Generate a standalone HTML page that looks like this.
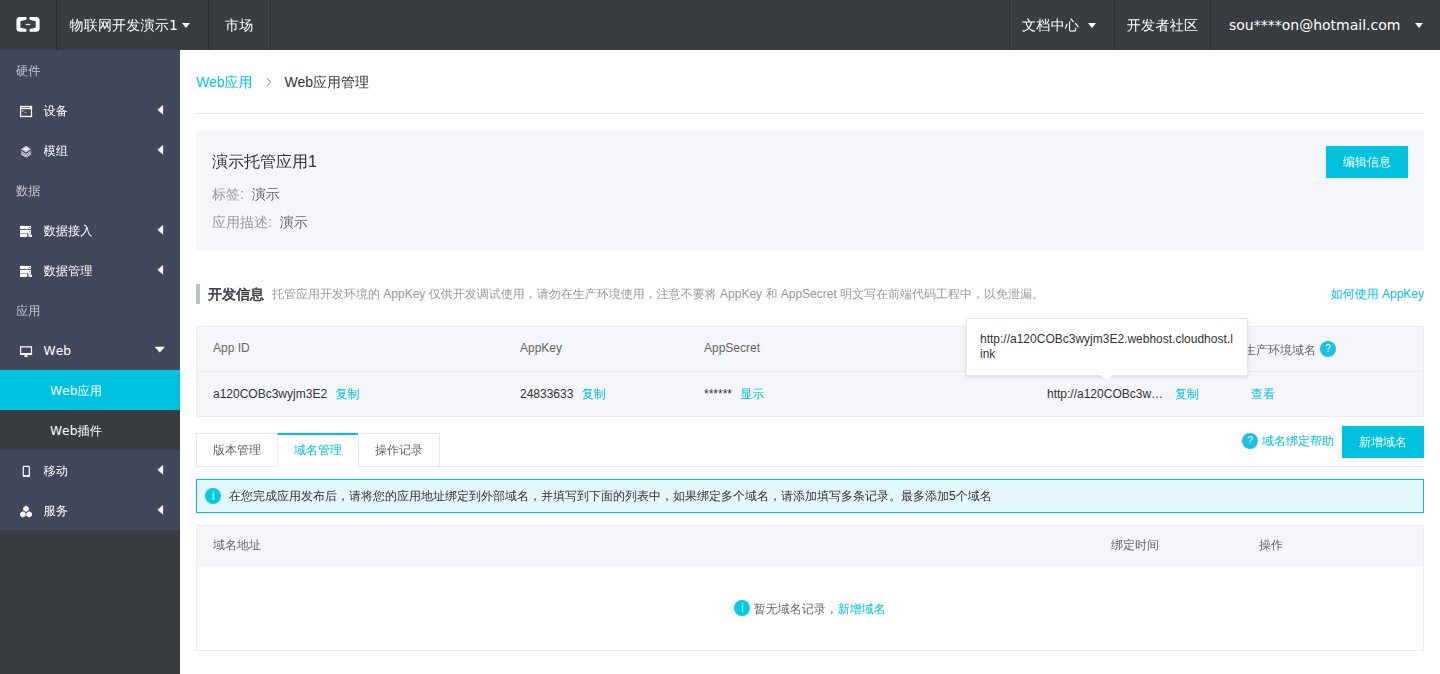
<!DOCTYPE html>
<html lang="zh-CN">
<head>
<meta charset="utf-8">
<title>Web应用管理</title>
<style>
*{box-sizing:border-box;margin:0;padding:0}
html,body{width:1440px;height:674px;overflow:hidden;background:#fff}
body{font-family:"Liberation Sans","WenQuanYi Zen Hei",sans-serif;font-size:12px;color:#333;position:relative}
a{color:#00c1de;text-decoration:none}
.ui{font-family:"DejaVu Sans","WenQuanYi Zen Hei",sans-serif;font-kerning:none}

/* top bar */
#top{position:absolute;left:0;top:0;width:1440px;height:50px;background:#373d41;color:#fff;font-size:14px}
#top .cell{position:absolute;top:0;height:50px;line-height:50px;border-right:1px solid #2a2f32;white-space:nowrap}
#top .cell.r{border-right:0;border-left:1px solid #2a2f32}
.caret{position:absolute;top:23px;width:0;height:0;border-left:4.5px solid transparent;border-right:4.5px solid transparent;border-top:5.4px solid #fff}

/* sidebar */
#side{position:absolute;left:0;top:50px;width:180px;height:624px;background:#373d41;color:#fff;font-size:12.25px}
#side .nav{background:#42485b;height:480px;position:relative}
#side .grp{height:40px;line-height:42px;overflow:hidden;padding-left:16px;color:#c4c7ce}
#side .it{height:40px;line-height:42px;overflow:hidden;position:relative;padding-left:43.6px;white-space:nowrap}
#side .it svg{position:absolute;left:16px;top:10px}
#side .it svg.ar{left:0;top:0}
#side .sub{height:40px;line-height:42px;overflow:hidden;padding-left:50px;background:#373d41}
#side .sub.on{background:#00c1de}

/* main */
#main{position:absolute;left:196px;top:50px;width:1228px;height:624px}
.crumb{position:absolute;left:0;top:0;width:1228px;height:64px;border-bottom:1px solid #ebecee;font-size:14px;line-height:64px}
.crumb .sep{display:inline-block;width:32px;height:14px;vertical-align:-2px}
.card{position:absolute;left:0;top:80px;width:1228px;height:120px;background:#f5f6fa}
.card h2{position:absolute;left:16px;top:20px;font-size:16px;font-weight:normal;line-height:24px;color:#333}
.card .ln{position:absolute;left:16px;font-size:14px;line-height:20px;color:#999}
.card .ln b{font-weight:normal;color:#666;margin-left:4px}
.btn{position:absolute;display:block;width:82px;height:32px;line-height:32px;text-align:center;background:#00c1de;color:#fff;font-size:12px}
.sec{position:absolute;left:0;top:234px;width:1228px;height:20px;line-height:20px;border-left:4px solid #b4c3cc;padding-left:8px;font-size:12px;color:#999;white-space:nowrap}
.sec b{font-size:14px;font-weight:normal;color:#373d41;-webkit-text-stroke:.6px #373d41;margin-right:8px;vertical-align:top}
.sec a{position:absolute;right:0;top:0}
.t1{position:absolute;left:0;top:276px;width:1228px;height:91px;background:#f5f6fa;border:1px solid #ebecee}
.t1 .hd{position:absolute;left:0;top:0;width:1226px;height:45px;border-bottom:1px solid #ebecee;color:#666}
.t1 span{position:absolute;white-space:nowrap;line-height:16px}
.tabs{position:absolute;left:0;top:383px;width:1228px;height:34px;border-bottom:1px solid #e8eaed}
.tabs .tb{position:absolute;top:0;height:34px;width:82px;border:1px solid #e6e8eb;line-height:32px;text-align:center;color:#666;background:#fff}
.tabs .tb.on{border-top:2px solid #00c1de;border-bottom-color:#fff;color:#00c1de;line-height:30px}
.qm{display:inline-block;width:16px;height:16px;border-radius:8px;background:#1fc0e0;color:rgba(255,255,255,.88);text-align:center;line-height:15px;font-size:10.5px;vertical-align:middle}
.alert{position:absolute;left:0;top:429px;width:1228px;height:34px;border:1px solid #00c1de;background:#e2f8fd;line-height:32px;padding-left:32px;color:#333}
.alert .qm,.empty .qm{background:#06c9e5;font-size:12px;color:rgba(255,255,255,.8)}
.alert .qm{position:absolute;left:8px;top:8px;line-height:16px}
.empty .qm{position:relative;top:-2px;line-height:17px}
.t2{position:absolute;left:0;top:475px;width:1228px;height:126px;border:1px solid #ebecee;background:#fff}
.t2 .hd{position:absolute;left:0;top:0;width:1226px;height:40px;background:#f5f6fa;border-bottom:1px solid #ebecee;color:#666}
.t2 span{position:absolute;white-space:nowrap;line-height:16px}
.empty{position:absolute;left:0;top:40px;width:1226px;height:84px;overflow:hidden;line-height:86px;text-align:center;color:#666}
.tip{position:absolute;left:770px;top:268px;width:282px;height:58px;background:#fff;border:1px solid #e4e7ea;box-shadow:0 1px 4px rgba(0,0,0,.12);padding:13px 13px 0 13px;line-height:15px;color:#333;word-break:break-all}
.tip i{position:absolute;left:135px;bottom:-5px;width:9px;height:9px;background:#fff;border-right:1px solid #e6e9ed;border-bottom:1px solid #e6e9ed;transform:rotate(45deg)}
</style>
</head>
<body>
<div id="top" class="ui">
  <div class="cell" style="left:0;width:57px"><svg style="position:absolute;left:16px;top:16px" width="25" height="17" viewBox="0 0 25 17"><g fill="#fff" transform="translate(.45 .9) scale(.98 .975)"><path d="M10.2 0H3.6A3.6 3.6 0 0 0 0 3.6V11.7A3.6 3.6 0 0 0 3.6 15.3H10.2V12.4L4 11V4.4L10.2 2.9Z"/><path d="M13.4 0H20A3.6 3.6 0 0 1 23.6 3.6V11.7A3.6 3.6 0 0 1 20 15.3H13.4V12.4L19.6 11V4.4L13.4 2.9Z"/><rect x="9.4" y="7.1" width="4.8" height="1.3" opacity=".85"/></g></svg></div>
  <div class="cell" style="left:57px;width:152px;padding-left:12.5px;letter-spacing:.2px">物联网开发演示1<span class="caret" style="left:125px"></span></div>
  <div class="cell" style="left:209px;width:62px;padding-left:16px;letter-spacing:.35px">市场</div>
  <div class="cell r" style="left:1009px;width:105px;padding-left:12px;letter-spacing:.35px">文档中心<span class="caret" style="left:78px"></span></div>
  <div class="cell r" style="left:1114px;width:96px;padding-left:11.7px;letter-spacing:.35px">开发者社区</div>
  <div class="cell r" style="left:1210px;width:230px;padding-left:18px">sou****on@hotmail.com<span class="caret" style="left:203.7px"></span></div>
</div>

<div id="side" class="ui">
 <div class="nav">
  <div class="grp">硬件</div>
  <div class="it"><svg width="20" height="20" viewBox="0 0 20 20"><g fill="#fff"><rect x="4" y="5.9" width="12.1" height="3.3"/><rect x="4" y="5.9" width="1.2" height="11.2"/><rect x="14.9" y="5.9" width="1.2" height="11.2"/><rect x="4" y="16" width="12.1" height="1.1"/><rect x="5.2" y="15.6" width="9.7" height=".5" opacity=".5"/><rect x="5.1" y="7.2" width="9" height=".8" fill="#42485b" opacity=".8"/><path d="M6.1 10.1l1.9 1-1.9 1z" opacity=".75"/><rect x="8.2" y="11.9" width="2.4" height=".8" opacity=".6"/></g></svg>设备<svg class="ar" width="180" height="40" viewBox="0 0 180 40"><path fill="#fff" d="M157.4 19.8L163.1 14.9V24.8Z"/></svg></div>
  <div class="it"><svg width="20" height="20" viewBox="0 0 20 20"><path d="M10.05 5.8L15.2 9.2L10.05 12.6L4.9 9.2Z" fill="#fff" opacity=".7"/><path d="M10.05 7.3L12.9 9.2L10.05 11.1L7.2 9.2Z" fill="#fff"/><g fill="none" stroke="#fff" stroke-width=".85" opacity=".95"><path d="M5 11.3L10.05 14.4L15.1 11.3"/><path d="M5 12.7L10.05 15.8L15.1 12.7"/><path d="M5 14.1L10.05 17L15.1 14.1"/></g></svg>模组<svg class="ar" width="180" height="40" viewBox="0 0 180 40"><path fill="#fff" d="M157.4 19.8L163.1 14.9V24.8Z"/></svg></div>
  <div class="grp">数据</div>
  <div class="it"><svg width="20" height="20" viewBox="0 0 20 20"><g fill="#fff"><rect x="4" y="5.9" width="11" height="3.1"/><rect x="4" y="9.9" width="11" height="3.2"/><rect x="4" y="13.1" width="7.3" height=".9" opacity=".55"/><rect x="4" y="14" width="7.3" height="3"/><path d="M12.1 13.1H15L13.5 16.9H12.7Z" opacity=".9"/><rect x="14.1" y="14.7" width="1.9" height="2.3"/><rect x="13" y="7" width="1.4" height=".8" fill="#42485b" opacity=".8"/><rect x="13" y="11" width="1.4" height=".8" fill="#42485b" opacity=".6"/></g></svg>数据接入<svg class="ar" width="180" height="40" viewBox="0 0 180 40"><path fill="#fff" d="M157.4 19.8L163.1 14.9V24.8Z"/></svg></div>
  <div class="it"><svg width="20" height="20" viewBox="0 0 20 20"><g fill="#fff"><rect x="4" y="5.9" width="11" height="3.1"/><rect x="4" y="9.9" width="11" height="3.2"/><rect x="4" y="13.1" width="7.3" height=".9" opacity=".55"/><rect x="4" y="14" width="7.3" height="3"/><path d="M12.1 13.1H15L13.5 16.9H12.7Z" opacity=".9"/><rect x="14.1" y="14.7" width="1.9" height="2.3"/><rect x="13" y="7" width="1.4" height=".8" fill="#42485b" opacity=".8"/><rect x="13" y="11" width="1.4" height=".8" fill="#42485b" opacity=".6"/></g></svg>数据管理<svg class="ar" width="180" height="40" viewBox="0 0 180 40"><path fill="#fff" d="M157.4 19.8L163.1 14.9V24.8Z"/></svg></div>
  <div class="grp">应用</div>
  <div class="it"><svg width="20" height="20" viewBox="0 0 20 20"><g fill="#fff"><path fill-rule="evenodd" d="M4 6.3H16.1V15H4ZM5.2 7.5V13.1H14.9V7.5Z"/><path d="M8.9 15H11.2L12 17H8Z" opacity=".9"/></g></svg>Web<svg class="ar" width="180" height="40" viewBox="0 0 180 40"><path fill="#fff" d="M154.7 16.8H164.9L159.8 22.6Z"/></svg></div>
  <div class="sub on">Web应用</div>
  <div class="sub">Web插件</div>
  <div class="it"><svg width="20" height="20" viewBox="0 0 20 20"><path fill="#fff" fill-rule="evenodd" d="M7.9 5.7H12.7A1.2 1.2 0 0 1 13.9 6.9V15.9A1.2 1.2 0 0 1 12.7 17.1H7.9A1.2 1.2 0 0 1 6.7 15.9V6.9A1.2 1.2 0 0 1 7.9 5.7ZM7.9 6.9V14.9H12.7V6.9Z"/><rect x="9.9" y="15.6" width=".9" height=".9" fill="#42485b"/></svg>移动<svg class="ar" width="180" height="40" viewBox="0 0 180 40"><path fill="#fff" d="M157.4 19.8L163.1 14.9V24.8Z"/></svg></div>
  <div class="it"><svg width="20" height="20" viewBox="0 0 20 20"><g fill="#fff" stroke="#fff" stroke-width=".8" stroke-linejoin="round"><polygon points="10.00,6.10 12.34,7.45 12.34,10.15 10.00,11.50 7.66,10.15 7.66,7.45"/><polygon points="6.90,11.70 9.24,13.05 9.24,15.75 6.90,17.10 4.56,15.75 4.56,13.05"/><polygon points="13.15,11.70 15.49,13.05 15.49,15.75 13.15,17.10 10.81,15.75 10.81,13.05"/></g></svg>服务<svg class="ar" width="180" height="40" viewBox="0 0 180 40"><path fill="#fff" d="M157.4 19.8L163.1 14.9V24.8Z"/></svg></div>
 </div>
</div>

<div id="main">
  <div class="crumb"><a>Web应用</a><svg class="sep" width="32" height="14" viewBox="0 0 32 14"><path d="M13.7 3.1L17.8 7L13.7 10.9" fill="none" stroke="#858585" stroke-width="1"/></svg><span>Web应用管理</span></div>
  <div class="card">
    <h2>演示托管应用1</h2>
    <div class="ln" style="top:54px">标签: <b>演示</b></div>
    <div class="ln" style="top:82px">应用描述: <b>演示</b></div>
    <a class="btn" style="left:1130px;top:16px">编辑信息</a>
  </div>
  <div class="sec"><b>开发信息</b>托管应用开发环境的 AppKey 仅供开发调试使用，请勿在生产环境使用，注意不要将 AppKey 和 AppSecret 明文写在前端代码工程中，以免泄漏。<a>如何使用 AppKey</a></div>
  <div class="t1">
    <div class="hd">
      <span style="left:16px;top:13px">App ID</span>
      <span style="left:323px;top:13px">AppKey</span>
      <span style="left:507px;top:13px">AppSecret</span>
      <span style="left:1047px;top:15px">生产环境域名</span><em class="qm" style="position:absolute;left:1123px;top:14px;font-style:normal">?</em>
    </div>
    <span style="left:16px;top:59px">a120COBc3wyjm3E2 <a style="margin-left:5px">复制</a></span>
    <span style="left:323px;top:59px">24833633 <a style="margin-left:5px">复制</a></span>
    <span style="left:507px;top:59px">****** <a style="margin-left:5px">显示</a></span>
    <span style="left:850px;top:59px">http://a120COBc3w…</span>
    <span style="left:978px;top:59px"><a>复制</a></span>
    <span style="left:1054px;top:59px"><a>查看</a></span>
  </div>
  <div class="tabs">
    <div class="tb" style="left:0">版本管理</div>
    <div class="tb on" style="left:81px">域名管理</div>
    <div class="tb" style="left:162px">操作记录</div>
  </div>
  <a style="position:absolute;left:1066px;top:383px;line-height:16px;white-space:nowrap"><em class="qm" style="position:absolute;left:-20px;top:0;font-style:normal">?</em>域名绑定帮助</a>
  <a class="btn" style="left:1146px;top:376px">新增域名</a>
  <div class="alert"><em class="qm" style="font-style:normal">i</em>在您完成应用发布后，请将您的应用地址绑定到外部域名，并填写到下面的列表中，如果绑定多个域名，请添加填写多条记录。最多添加5个域名</div>
  <div class="t2">
    <div class="hd">
      <span style="left:16px;top:11px">域名地址</span>
      <span style="left:914px;top:11px">绑定时间</span>
      <span style="left:1062px;top:11px">操作</span>
    </div>
    <div class="empty"><em class="qm" style="font-style:normal">i</em> 暂无域名记录，<a>新增域名</a></div>
  </div>
  <div class="tip">http://a120COBc3wyjm3E2.webhost.cloudhost.link<i></i></div>
</div>
</body>
</html>
